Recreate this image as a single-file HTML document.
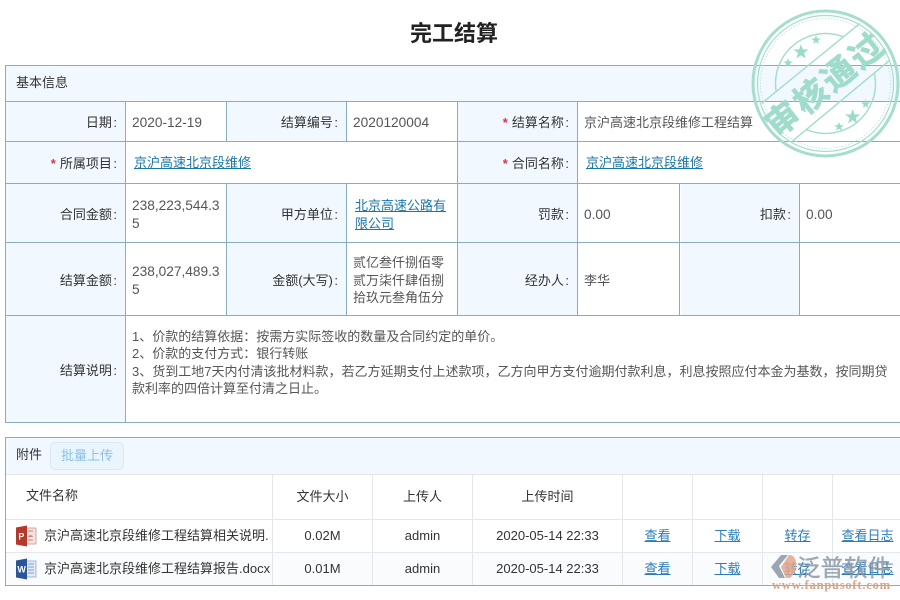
<!DOCTYPE html>
<html><head><meta charset="utf-8">
<style>
html,body{margin:0;padding:0;background:#fff;}
body{position:relative;width:900px;height:600px;overflow:hidden;font:13px/17.3px "Liberation Sans","Noto Sans CJK SC",sans-serif;color:#333;}
.a{position:absolute;box-sizing:border-box;}
.c{position:absolute;box-sizing:border-box;display:flex;align-items:center;}
.l{background:#f1f8ff;justify-content:flex-end;padding-right:8px;padding-top:3px;color:#333;}
.v{background:#fff;padding-left:6px;padding-top:3px;color:#555;}
.h{position:absolute;height:1px;background:#86aec0;left:5px;width:895px;}
.w{position:absolute;width:1px;background:#86aec0;}
.n{font-size:13.7px;line-height:18px;}
.k{margin-left:1.5px;}
a{color:#1b76a8;text-decoration:underline;}
.s{color:#d9363e;margin-right:4px;font-weight:bold;}
.g{position:absolute;background:#e3e6ea;}
.tc{position:absolute;box-sizing:border-box;display:flex;align-items:center;justify-content:center;color:#333;}
.tc a{color:#2a7db8;}
.fn{position:absolute;left:44px;width:227px;overflow:hidden;white-space:nowrap;color:#333;}
</style></head><body>
<div class="a" style="left:0;top:19px;width:908px;text-align:center;font-size:22px;line-height:30px;font-weight:bold;color:#222;">完工结算</div>

<div class="c" style="left:6px;top:66px;width:894px;height:34px;background:#f1f8ff;padding-left:10px;">基本信息</div>
<div class="a" style="left:6px;top:100px;width:894px;height:1px;background:#f1f8ff;"></div>

<div class="c l" style="left:6px;top:102px;width:119px;height:39px;">日期<span class="k">:</span></div>
<div class="c v" style="left:126px;top:102px;width:100px;height:39px;"><span class="n">2020-12-19</span></div>
<div class="c l" style="left:227px;top:102px;width:119px;height:39px;">结算编号<span class="k">:</span></div>
<div class="c v" style="left:347px;top:102px;width:110px;height:39px;"><span class="n">2020120004</span></div>
<div class="c l" style="left:458px;top:102px;width:119px;height:39px;"><span class="s">*</span>结算名称<span class="k">:</span></div>
<div class="c v" style="left:578px;top:102px;width:322px;height:39px;">京沪高速北京段维修工程结算</div>

<div class="c l" style="left:6px;top:142px;width:119px;height:41px;"><span class="s">*</span>所属项目<span class="k">:</span></div>
<div class="c v" style="left:126px;top:142px;width:331px;height:41px;padding-left:8px;padding-top:1px;"><a>京沪高速北京段维修</a></div>
<div class="c l" style="left:458px;top:142px;width:119px;height:41px;"><span class="s">*</span>合同名称<span class="k">:</span></div>
<div class="c v" style="left:578px;top:142px;width:322px;height:41px;padding-left:8px;padding-top:1px;"><a>京沪高速北京段维修</a></div>

<div class="c l" style="left:6px;top:184px;width:119px;height:58px;">合同金额<span class="k">:</span></div>
<div class="c v" style="left:126px;top:184px;width:100px;height:58px;"><span class="n">238,223,544.3<br>5</span></div>
<div class="c l" style="left:227px;top:184px;width:119px;height:58px;">甲方单位<span class="k">:</span></div>
<div class="c v" style="left:347px;top:184px;width:110px;height:58px;padding-left:8px;"><a>北京高速公路有<br>限公司</a></div>
<div class="c l" style="left:458px;top:184px;width:119px;height:58px;">罚款<span class="k">:</span></div>
<div class="c v" style="left:578px;top:184px;width:102px;height:58px;"><span class="n">0.00</span></div>
<div class="c l" style="left:681px;top:184px;width:118px;height:58px;">扣款<span class="k">:</span></div>
<div class="c v" style="left:800px;top:184px;width:100px;height:58px;"><span class="n">0.00</span></div>

<div class="c l" style="left:6px;top:243px;width:119px;height:72px;">结算金额<span class="k">:</span></div>
<div class="c v" style="left:126px;top:243px;width:100px;height:72px;"><span class="n">238,027,489.3<br>5</span></div>
<div class="c l" style="left:227px;top:243px;width:119px;height:72px;">金额(大写)<span class="k">:</span></div>
<div class="c v" style="left:347px;top:243px;width:110px;height:72px;line-height:17.5px;"><span>贰亿叁仟捌佰零<br>贰万柒仟肆佰捌<br>拾玖元叁角伍分</span></div>
<div class="c l" style="left:458px;top:243px;width:119px;height:72px;">经办人<span class="k">:</span></div>
<div class="c v" style="left:578px;top:243px;width:102px;height:72px;">李华</div>
<div class="c l" style="left:681px;top:243px;width:118px;height:72px;"></div>

<div class="c l" style="left:6px;top:316px;width:119px;height:106px;">结算说明<span class="k">:</span></div>
<div class="a" style="left:132px;top:328px;width:768px;color:#555;white-space:nowrap;">1、价款的结算依据：按需方实际签收的数量及合同约定的单价。<br>2、价款的支付方式：银行转账<br>3、货到工地7天内付清该批材料款，若乙方延期支付上述款项，乙方向甲方支付逾期付款利息，利息按照应付本金为基数，按同期贷<br>款利率的四倍计算至付清之日止。</div>

<div class="h" style="top:65px"></div>
<div class="h" style="top:101px"></div>
<div class="h" style="top:141px"></div>
<div class="h" style="top:183px"></div>
<div class="h" style="top:242px"></div>
<div class="h" style="top:315px"></div>
<div class="h" style="top:422px"></div>
<div class="w" style="left:5px;top:65px;height:358px"></div>
<div class="w" style="left:125px;top:101px;height:321px"></div>
<div class="w" style="left:226px;top:101px;height:40px"></div>
<div class="w" style="left:226px;top:183px;height:132px"></div>
<div class="w" style="left:346px;top:101px;height:40px"></div>
<div class="w" style="left:346px;top:183px;height:132px"></div>
<div class="w" style="left:457px;top:101px;height:214px"></div>
<div class="w" style="left:577px;top:101px;height:214px"></div>
<div class="w" style="left:679px;top:183px;height:132px"></div>
<div class="w" style="left:799px;top:183px;height:132px"></div>

<!-- attachments -->
<div class="a" style="left:6px;top:438px;width:894px;height:36px;background:#f1f8ff;"></div>
<div class="a" style="left:16px;top:446px;">附件</div>
<div class="a" style="left:50px;top:442px;width:74px;height:28px;background:#e9f4fd;border:1px solid #d8e8f5;border-radius:5px;color:#8cc1e6;text-align:center;line-height:25px;">批量上传</div>
<div class="h" style="top:437px"></div>
<div class="w" style="left:5px;top:437px;height:149px"></div>
<div class="a" style="left:6px;top:553px;width:894px;height:32px;background:#fafbfc;"></div>
<div class="g" style="left:6px;top:474px;width:894px;height:1px"></div>
<div class="g" style="left:6px;top:519px;width:894px;height:1px"></div>
<div class="g" style="left:6px;top:552px;width:894px;height:1px"></div>
<div class="g" style="left:272px;top:475px;width:1px;height:110px"></div>
<div class="g" style="left:372px;top:475px;width:1px;height:110px"></div>
<div class="g" style="left:472px;top:475px;width:1px;height:110px"></div>
<div class="g" style="left:622px;top:475px;width:1px;height:110px"></div>
<div class="g" style="left:692px;top:475px;width:1px;height:110px"></div>
<div class="g" style="left:762px;top:475px;width:1px;height:110px"></div>
<div class="g" style="left:832px;top:475px;width:1px;height:110px"></div>
<div class="h" style="top:585px"></div>

<div class="a" style="left:26px;top:487px;">文件名称</div>
<div class="tc" style="left:273px;top:475px;width:99px;height:44px;">文件大小</div>
<div class="tc" style="left:373px;top:475px;width:99px;height:44px;">上传人</div>
<div class="tc" style="left:473px;top:475px;width:149px;height:44px;">上传时间</div>

<svg class="a" style="left:15px;top:525px" width="22" height="22" viewBox="0 0 22 22">
<rect x="9" y="3" width="12" height="16" fill="#f3e3e0" stroke="#c9867c" stroke-width=".7"/>
<path d="M13 6h5M13 15h5" stroke="#c9867c" stroke-width="1"/><path d="M13 12a2.6 2.6 0 0 1 5 0z" fill="#c9867c"/>
<path d="M1 2.5 12 .5v21L1 19.5z" fill="#b5382c"/>
<text x="3.4" y="14.5" font-size="9" font-weight="bold" fill="#fff" font-family="Liberation Sans">P</text>
</svg>
<svg class="a" style="left:15px;top:558px" width="22" height="22" viewBox="0 0 22 22">
<rect x="9" y="3" width="12" height="16" fill="#e4ebf5" stroke="#7f9cc8" stroke-width=".7"/>
<path d="M13 6h6M13 9h6M13 12h6M13 15h6" stroke="#7f9cc8" stroke-width="1"/>
<path d="M1 2.5 12 .5v21L1 19.5z" fill="#2a5699"/>
<text x="2.4" y="14.5" font-size="9" font-weight="bold" fill="#fff" font-family="Liberation Sans">W</text>
</svg>

<div class="fn" style="top:527px;">京沪高速北京段维修工程结算相关说明.</div>
<div class="fn" style="top:560px;">京沪高速北京段维修工程结算报告.docx</div>

<div class="tc" style="left:273px;top:520px;width:99px;height:32px;">0.02M</div>
<div class="tc" style="left:373px;top:520px;width:99px;height:32px;">admin</div>
<div class="tc" style="left:473px;top:520px;width:149px;height:32px;">2020-05-14 22:33</div>
<div class="tc" style="left:623px;top:520px;width:69px;height:32px;"><a>查看</a></div>
<div class="tc" style="left:693px;top:520px;width:69px;height:32px;"><a>下载</a></div>
<div class="tc" style="left:763px;top:520px;width:69px;height:32px;"><a>转存</a></div>
<div class="tc" style="left:833px;top:520px;width:69px;height:32px;"><a>查看日志</a></div>

<div class="tc" style="left:273px;top:553px;width:99px;height:32px;">0.01M</div>
<div class="tc" style="left:373px;top:553px;width:99px;height:32px;">admin</div>
<div class="tc" style="left:473px;top:553px;width:149px;height:32px;">2020-05-14 22:33</div>
<div class="tc" style="left:623px;top:553px;width:69px;height:32px;"><a>查看</a></div>
<div class="tc" style="left:693px;top:553px;width:69px;height:32px;"><a>下载</a></div>
<div class="tc" style="left:763px;top:553px;width:69px;height:32px;"><a>转存</a></div>
<div class="tc" style="left:833px;top:553px;width:69px;height:32px;"><a>查看日志</a></div>

<!-- watermark -->
<svg class="a" style="left:770px;top:550px;overflow:visible;" width="130" height="50" viewBox="0 0 130 50">
<path d="M11 5h7L9 16l6 12h-6L1 17z" fill="#8b96a6" opacity=".85"/>
<path d="M19 5c5 0 7 4 7 9s-2 11-6 14h-4L11 17z" fill="#e0a48c" opacity=".85"/>
<text x="27" y="26" font-size="23.5" font-family="Noto Sans CJK SC,sans-serif" fill="#8d98a8" fill-opacity=".85" stroke="#8d98a8" stroke-width=".3">泛普软件</text>
<text x="2" y="39" font-size="12.5" font-weight="bold" textLength="118" font-family="Liberation Serif,serif" fill="#d9a488">www.fanpusoft.com</text>
</svg>

<!-- stamp -->
<svg class="a" style="left:750px;top:8px;overflow:visible;" width="150" height="150" viewBox="0 0 150 150">
<defs><mask id="m" maskUnits="userSpaceOnUse" x="-20" y="-20" width="200" height="200">
<rect x="-20" y="-20" width="200" height="200" fill="#fff"/>
<rect x="-40" y="51" width="230" height="48" fill="#000" transform="rotate(-39 75 75)"/>
</mask></defs>
<g fill="none" stroke="#a6dece">
<circle cx="75.5" cy="75.5" r="72.5" stroke-width="3"/>
<circle cx="75.5" cy="75.5" r="68" stroke-width="1.2"/>
<circle cx="75.5" cy="75.5" r="65" stroke-width="1" stroke-dasharray="1 2"/>
<circle cx="75.5" cy="75.5" r="50" stroke-width="1.5" mask="url(#m)"/>
<path d="M11.7 95.3 110 15.3M41.7 133.7 140 52" stroke-width="1.5"/>
</g>
<g fill="#9adcc8">
<polygon points="51,36 52.9,41.4 58.6,41.5 54,45 55.7,50.5 51,47.2 46.3,50.5 48,45 43.4,41.5 49.1,41.4"/>
<polygon points="38,50 39.2,53.4 42.8,53.5 39.9,55.7 40.9,59 38,57 35.1,59 36.1,55.7 33.2,53.5 36.8,53.4"/>
<polygon points="66,27 67.2,30.4 70.8,30.5 67.9,32.7 68.9,36 66,34 63.1,36 64.1,32.7 61.2,30.5 64.8,30.4"/>
<polygon points="102.7,101 104.6,106.4 110.3,106.5 105.7,110 107.4,115.5 102.7,112.2 98,115.5 99.7,110 95.1,106.5 100.8,106.4"/>
<polygon points="89,113.7 90.2,117.1 93.8,117.2 90.9,119.4 91.9,122.7 89,120.7 86.1,122.7 87.1,119.4 84.2,117.2 87.8,117.1"/>
<polygon points="115.7,91 116.9,94.4 120.5,94.5 117.6,96.7 118.6,100 115.7,98 112.8,100 113.8,96.7 110.9,94.5 114.5,94.4"/>
</g>
<text x="75" y="88" text-anchor="middle" font-size="33" font-weight="bold" letter-spacing="3" fill="#a0dccb" stroke="#a0dccb" stroke-width=".8" font-family="Noto Sans CJK SC,sans-serif" transform="rotate(-39 75 75)">审核通过</text>
</svg>
</body></html>
